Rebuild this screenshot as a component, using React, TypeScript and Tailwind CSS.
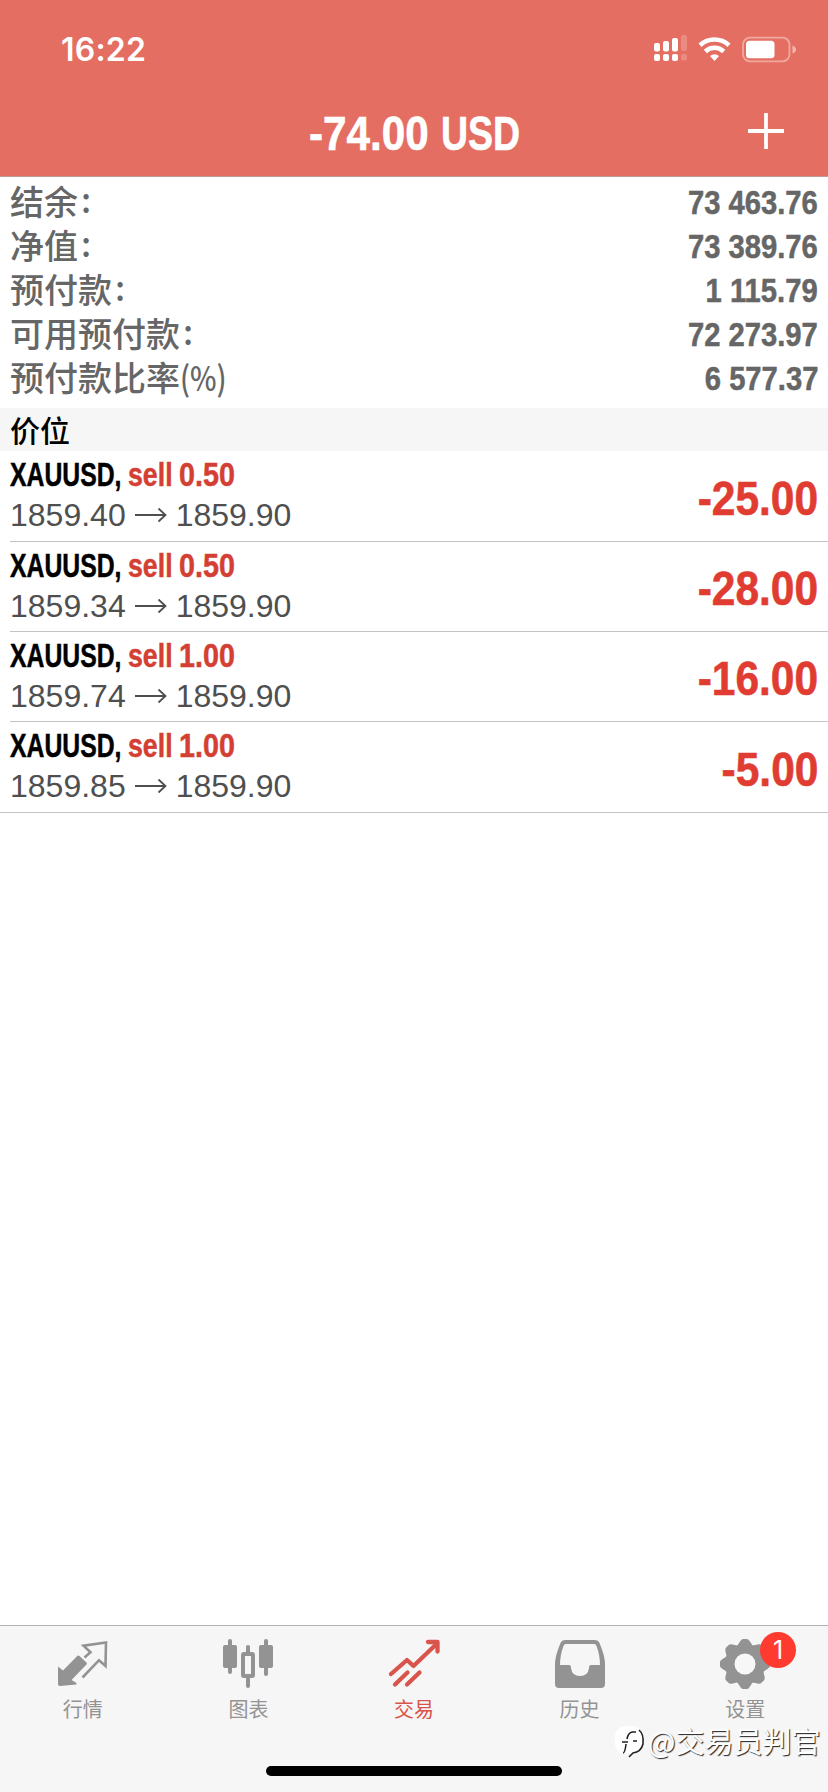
import type { ReactNode } from "react";
import clsx from "clsx";

const summary = [
  { label: "结余", suffix: ":", value: "73 463.76" },
  { label: "净值", suffix: ":", value: "73 389.76" },
  { label: "预付款", suffix: ":", value: "1 115.79" },
  { label: "可用预付款", suffix: ":", value: "72 273.97" },
  { label: "预付款比率", suffix: "(%)", value: "6 577.37" },
];

const positions = [
  { volume: "0.50", open: "1859.40", current: "1859.90", profit: "-25.00" },
  { volume: "0.50", open: "1859.34", current: "1859.90", profit: "-28.00" },
  { volume: "1.00", open: "1859.74", current: "1859.90", profit: "-16.00" },
  { volume: "1.00", open: "1859.85", current: "1859.90", profit: "-5.00" },
];

const StatusIcons = () => (
  <svg width="146" height="30" viewBox="0 0 146 30" fill="#fff">
    <rect x="1" y="8" width="6" height="8.500" rx="2" />
    <rect x="10" y="6" width="6" height="10.500" rx="2" />
    <rect x="19" y="3" width="6" height="13.500" rx="2" />
    <rect x="1" y="19" width="6" height="7" rx="2" />
    <rect x="10" y="19" width="6" height="7" rx="2" />
    <rect x="19" y="19" width="6" height="7" rx="2" />
    <g opacity="0.2">
      <rect x="28" y="0" width="6" height="16" rx="2" />
      <rect x="28" y="19" width="6" height="6.500" rx="2" />
    </g>
    <g fill="none" stroke="#fff" strokeWidth="4.600">
      <path d="M47 10.200A21.500 21.500 0 0 1 76 10.200" />
      <path d="M52.300 16.500A13.300 13.300 0 0 1 70.700 16.500" />
    </g>
    <path d="M61.500 26 57 21Q61.500 17.500 66 21Z" />
    <rect x="90" y="2.700" width="46.500" height="23.600" rx="7" fill="none" stroke="#fff" strokeOpacity="0.4" strokeWidth="1.800" />
    <rect x="93" y="5.800" width="28.500" height="17.400" rx="3.500" />
    <path d="M139.500 10.500Q143 12 143 14.500T139.500 18.500Z" opacity="0.5" />
  </svg>
);

const QuotesIcon = () => (
  <svg width="52" height="52" viewBox="0 0 52 52">
    <path d="M1 21.500 6 25.500 20.500 10.800Q21.500 10 22.500 11L29.500 17.500Q30.200 18.500 29.500 19.500L14.500 35 19.500 38V39.500L3 41Q1 41 1 39Z" fill="#939393" />
    <path d="M27.500 11.500 33.500 6.200 26.500-.3 49-3.500 48.500 20 42 14.200 25.500 31.500" transform="translate(0 1)" fill="none" stroke="#939393" strokeWidth="2.600" />
  </svg>
);

const ChartIcon = () => (
  <svg width="52" height="52" viewBox="0 0 52 52" fill="#939393">
    <rect x="6" y="-6" width="4" height="35" rx="2" />
    <rect x="1" y="0" width="14" height="23" rx="2" />
    <rect x="42" y="-6" width="4" height="37" rx="2" />
    <rect x="37" y="0" width="14" height="23" rx="2" />
    <rect x="24" y="0" width="4" height="10" rx="2" />
    <rect x="24" y="30" width="4" height="13" rx="2" />
    <rect x="21" y="9" width="10" height="22" fill="none" stroke="#939393" strokeWidth="4" rx="1" />
  </svg>
);

const TradeIcon = () => (
  <svg width="52" height="52" viewBox="0 0 52 52" fill="none" stroke="#d9544b" strokeWidth="4.300" strokeLinecap="round" strokeLinejoin="round">
    <path d="M3 29 19 15 25.500 21 49 -1.500" />
    <path d="M40 -3H49.500V6.500" />
    <path d="M7 39.500 19.500 27.500M19 39.500 31.500 27.500" />
  </svg>
);

const HistoryIcon = () => (
  <svg width="52" height="52" viewBox="0 0 52 52">
    <path d="M11-5H41Q44-5 45.500 -2Q51 11 51 19V39Q51 43 47 43H5Q1 43 1 39V19Q1 11 6.500-2Q8-5 11-5ZM12-1Q10-1 9.500 1Q6 10 6 20H15Q17 20 17 23Q18 31 26 31Q34 31 35 23Q35 20 37 20H46Q46 10 42.500 1Q42-1 40-1Z" fill="#939393" />
  </svg>
);

const SettingsIcon = () => (
  <svg width="52" height="52" viewBox="0 0 52 52">
    <g fill="#939393" transform="translate(26 19)">
      <circle r="20" />
      {[0, 45, 90, 135, 180, 225, 270, 315].map((angle) => (
        <path key={angle} d="M-8.500-17-5-22.500Q-3.500-25-2-25H2Q3.500-25 5-22.500L8.500-17Z" transform={`rotate(${angle})`} />
      ))}
    </g>
    <circle cx="26" cy="19" r="10.500" fill="#f7f7f7" />
  </svg>
);

const tabs: { label: string; icon: ReactNode; active?: boolean; badge?: string }[] = [
  { label: "行情", icon: <QuotesIcon /> },
  { label: "图表", icon: <ChartIcon /> },
  { label: "交易", icon: <TradeIcon />, active: true },
  { label: "历史", icon: <HistoryIcon /> },
  { label: "设置", icon: <SettingsIcon />, badge: "1" },
];

const Header = () => (
  <header className="h-[177px] bg-[#e56e62] border-b border-[#c39a94] text-white">
    <div className="h-[100px] flex items-center justify-between pl-[61px] pr-[29px]">
      <span className="font-['Inter'] font-semibold text-[32px] leading-none tracking-[0.2px]">16:22</span>
      <StatusIcons />
    </div>
    <div className="h-[68px] grid grid-cols-[309px_1fr_81px] items-center">
      <span />
      <div className="flex text-[48px] leading-none font-bold whitespace-nowrap [-webkit-text-stroke:0.6px_currentColor]">
        <span className="w-[132px] origin-left scale-x-[0.88]">-74.00</span>
        <span className="origin-left scale-x-[0.78]">USD</span>
      </div>
      <svg className="mb-[6px]" width="38" height="38" viewBox="0 0 38 38" stroke="#fff" strokeWidth="3.800">
        <path d="M1 19H37M19 1V37" />
      </svg>
    </div>
  </header>
);

const Summary = () => (
  <section className="h-[231px] pt-[3px] px-[10px] text-[#666]">
    {summary.map((row) => (
      <div key={row.label} className="h-[44px] flex items-center justify-between whitespace-nowrap">
        <div className="flex items-center pb-[2px] font-['Noto_Sans_CJK_SC'] font-medium text-[34px] leading-none">
          <span>{row.label}</span>
          <span className={row.suffix === ":" ? "pl-[3px] pb-1" : "origin-left scale-x-[0.83]"}>{row.suffix}</span>
        </div>
        <span className="origin-right scale-x-[0.885] text-[33px] leading-none font-bold [-webkit-text-stroke:0.5px_currentColor]">{row.value}</span>
      </div>
    ))}
  </section>
);

const Positions = () => (
  <section>
    <h2 className="h-[43px] flex items-center bg-[#f6f6f6] pl-[10px] pb-[2px] font-['Noto_Sans_CJK_SC'] font-medium text-[30px] leading-none text-black">
      价位
    </h2>
    {positions.map((row) => (
      <div
        key={row.open}
        className="flex items-center justify-between border-b border-[#c3c3c6] h-[90px] ml-[10px] pr-[10px] first-of-type:h-[91px] last:h-[91px] last:ml-0 last:pl-[10px]"
      >
        <div className="pb-[2px]">
          <div className="h-[40px] flex items-center text-[33px] leading-none font-bold whitespace-nowrap text-[#d43f34] [-webkit-text-stroke:0.5px_currentColor]">
            <span className="w-[118px] origin-left scale-x-[0.75] text-black">XAUUSD,</span>
            <span className="w-[51px] origin-left scale-x-[0.81]">sell</span>
            <span className="origin-left scale-x-[0.87]">{row.volume}</span>
          </div>
          <div className="h-[41px] flex items-center gap-[9px] text-[32px] leading-none text-[#4f4f4f]">
            <span>{row.open}</span>
            <svg width="32" height="16" viewBox="0 0 32 16" fill="none" stroke="#4f4f4f" strokeWidth="1.800">
              <path d="M0 8H30M23.500 1.500 30.500 8 23.500 14.500" />
            </svg>
            <span>{row.current}</span>
          </div>
        </div>
        <span className="origin-right scale-x-[0.885] pt-[5px] text-[48px] leading-none font-bold text-[#e03c31] [-webkit-text-stroke:0.6px_currentColor]">
          {row.profit}
        </span>
      </div>
    ))}
  </section>
);

const TabBar = () => (
  <nav className="relative h-[167px] bg-[#f6f6f6] border-t border-[#b2b2b2] flex flex-col">
    <div className="grid grid-cols-5 h-[140px]">
      {tabs.map((tab) => (
        <div key={tab.label} className={clsx("flex flex-col items-center pt-[19px]", tab.active ? "text-[#d9544b]" : "text-[#939393]")}>
          <div className="relative h-[54px] [&>svg]:overflow-visible">
            {tab.icon}
            {tab.badge && (
              <span className="absolute left-[41px] -top-[13px] size-9 rounded-full bg-[#ff3b2f] text-white font-['Inter'] text-[25px] leading-none flex items-center justify-center">
                {tab.badge}
              </span>
            )}
          </div>
          <span className="font-['Noto_Sans_CJK_SC'] text-[20px] leading-none">{tab.label}</span>
        </div>
      ))}
    </div>
    <div className="w-[296px] h-[10px] rounded-full bg-black mx-auto" />
    <div className="absolute left-[614px] top-[99px] flex items-center">
      <svg width="34" height="34" viewBox="0 0 34 34" fill="none">
        <rect x="1" y="1" width="28" height="28" rx="11" fill="#fff" />
        <path d="M25 5Q30 9 29 19Q27 27 19 28L15 32" stroke="#222" strokeWidth="1.600" />
        <path d="M9 28Q11 28 12 19M13 14Q14 8 18 7H22M8 17H14M19 16H23" stroke="#222" strokeWidth="1.600" />
      </svg>
      <span className="pb-[3px] font-['Noto_Sans_CJK_SC'] text-[29px] leading-none text-white whitespace-nowrap [text-shadow:1px_1px_1px_#222]">@交易员判官</span>
    </div>
  </nav>
);

export default function App() {
  return (
    <div className="w-[828px] h-[1792px] flex flex-col bg-white overflow-hidden font-['Liberation_Sans','Noto_Sans_CJK_SC',sans-serif]">
      <Header />
      <Summary />
      <Positions />
      <div className="flex-1" />
      <TabBar />
    </div>
  );
}
